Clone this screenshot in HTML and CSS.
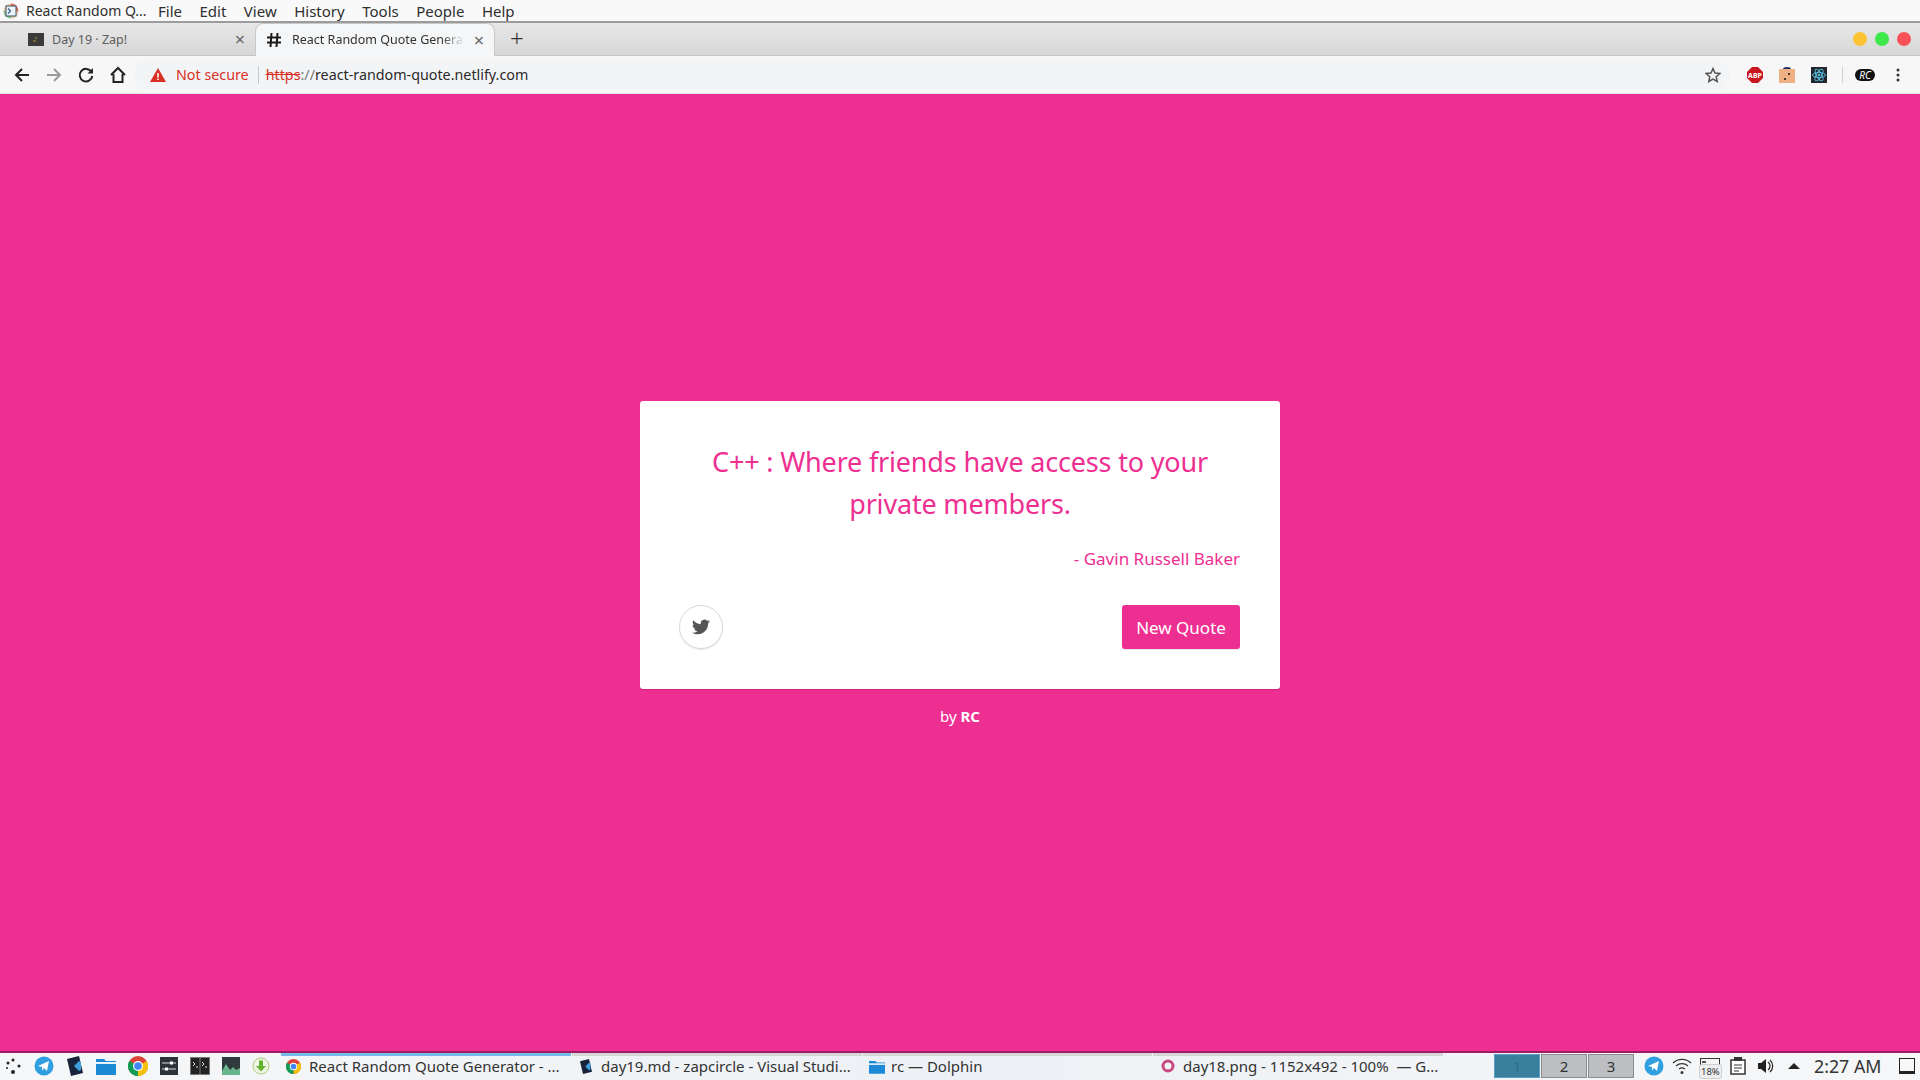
FILE: index.html

```html
<!DOCTYPE html>
<html lang="en">
<head>
  <meta charset="UTF-8" />
  <title>React Random Quote Generator</title>
  <link rel="stylesheet" href="styles.css">
</head>
<body>
  <div class="menubar">
    <svg class="app-icon" width="16" height="16" viewBox="0 0 16 16">
      <circle cx="8" cy="8" r="7.5" fill="#e8c9a0"/>
      <path d="M8 .5A7.5 7.5 0 0 1 15.5 8H8z" fill="#e06a5c"/>
      <path d="M.5 8A7.5 7.5 0 0 0 8 15.5V8z" fill="#8cc58a"/>
      <rect x="3" y="3" width="10" height="10" fill="#eef3f7" stroke="#35556e"/>
      <path d="M5 5.5 7.5 8 5 10.500" fill="none" stroke="#2a5d88" stroke-width="1.200"/>
    </svg>
    <span class="app-name">React Random Q...</span>
    <span class="menu-item">File</span>
    <span class="menu-item">Edit</span>
    <span class="menu-item">View</span>
    <span class="menu-item">History</span>
    <span class="menu-item">Tools</span>
    <span class="menu-item">People</span>
    <span class="menu-item">Help</span>
  </div>

  <div class="tabstrip">
    <div class="tab">
      <svg class="tab-icon" width="16" height="13" viewBox="0 0 16 13">
        <rect width="16" height="13" fill="#3a3a3a"/>
        <path d="M5 8h3M7 5h2" stroke="#b8962e" stroke-width="1"/>
      </svg>
      <span class="tab-title">Day 19 · Zap!</span>
      <span class="tab-close">×</span>
    </div>
    <div class="tab tab-active">
      <svg class="tab-icon" width="16" height="16" viewBox="0 0 16 16">
        <path d="M1 5.500h14M1 10.500h14M5.500 1 4.500 15M11.500 1l-1 14" stroke="#1b1b1b" stroke-width="2" fill="none"/>
      </svg>
      <span class="tab-title tab-title-fade">React Random Quote Genera</span>
      <span class="tab-close">×</span>
    </div>
    <span class="new-tab">+</span>
    <div class="window-dots">
      <span class="dot dot-yellow"></span>
      <span class="dot dot-green"></span>
      <span class="dot dot-red"></span>
    </div>
  </div>

  <div class="toolbar">
    <svg class="nav-icon" width="18" height="18" viewBox="0 0 18 18"><path d="M16 9H3M9 3 3 9l6 6" fill="none" stroke="#222" stroke-width="2"/></svg>
    <svg class="nav-icon" width="18" height="18" viewBox="0 0 18 18"><path d="M2 9h13M9 3l6 6-6 6" fill="none" stroke="#9a9a9a" stroke-width="2"/></svg>
    <svg class="nav-icon" width="18" height="18" viewBox="0 0 18 18"><path d="M14.500 6A6.300 6.300 0 1 0 15.300 10" fill="none" stroke="#222" stroke-width="2"/><path d="M16 2v5.500h-5.500z" fill="#222"/></svg>
    <svg class="nav-icon" width="18" height="18" viewBox="0 0 18 18"><path d="M2 9 9 2l7 7M4.500 8v8h9V8" fill="none" stroke="#222" stroke-width="2"/></svg>
    <div class="omnibox">
      <svg class="warn-icon" width="16" height="14" viewBox="0 0 16 14"><path d="M8 0 16 14H0z" fill="#d93025"/><path d="M8 5v4.500M8 10.500v1.500" stroke="#fff" stroke-width="1.500"/></svg>
      <span class="not-secure">Not secure</span>
      <span class="omni-sep"></span>
      <span class="url"><span class="url-https">https</span><span class="url-slash">://</span>react-random-quote.netlify.com</span>
      <svg class="star" width="16" height="16" viewBox="0 0 16 16"><path d="M8 1.500 10 6l4.800.5-3.600 3.200 1 4.800L8 12l-4.200 2.500 1-4.800L1.200 6.500 6 6z" fill="none" stroke="#555" stroke-width="1.500"/></svg>
    </div>
    <div class="extensions">
      <svg class="ext ext-gap" width="16" height="16" viewBox="0 0 16 16"><path d="M5 0h6l5 5v6l-5 5H5l-5-5V5z" fill="#c8171e"/><text x="8" y="10.500" class="abp-text">ABP</text></svg>
      <svg class="ext ext-gap" width="16" height="16" viewBox="0 0 16 16"><rect y="2" width="16" height="14" fill="#eeb184"/><path d="M4 2a4 2 0 0 1 8 0z" fill="#27306b"/><rect x="9" y="6" width="2" height="2" fill="#4a3a2a"/><rect x="5" y="11" width="2" height="2" fill="#4a3a2a"/></svg>
      <svg class="ext" width="16" height="16" viewBox="0 0 16 16"><rect width="16" height="16" fill="#20262b"/><g fill="none" stroke="#5cc3e6" stroke-width=".9"><ellipse cx="8" cy="8" rx="6.500" ry="2.600"/><ellipse cx="8" cy="8" rx="6.500" ry="2.600" transform="rotate(60 8 8)"/><ellipse cx="8" cy="8" rx="6.500" ry="2.600" transform="rotate(120 8 8)"/></g><circle cx="8" cy="8" r="1.300" fill="#5cc3e6"/></svg>
      <span class="ext-sep"></span>
      <svg class="ext-rc" width="20" height="12" viewBox="0 0 20 12"><rect width="20" height="12" rx="6" fill="#111"/><text x="10" y="9.500" class="rc-text">RC</text></svg>
      <svg class="kebab" width="4" height="14" viewBox="0 0 4 14"><circle cx="2" cy="2" r="1.500" fill="#333"/><circle cx="2" cy="7" r="1.500" fill="#333"/><circle cx="2" cy="12" r="1.500" fill="#333"/></svg>
    </div>
  </div>

  <main class="page">
    <div class="quote-card">
      <p class="quote-text">C++ : Where friends have access to your private members.</p>
      <p class="quote-author">- Gavin Russell Baker</p>
      <div class="quote-actions">
        <a class="tweet-btn">
          <svg width="18" height="18" viewBox="0 0 24 24"><path fill="#555" d="M23.953 4.570a10 10 0 0 1-2.825.775 4.958 4.958 0 0 0 2.163-2.723c-.951.555-2.005.959-3.127 1.184a4.920 4.920 0 0 0-8.384 4.482C7.690 8.095 4.067 6.130 1.640 3.162a4.822 4.822 0 0 0-.666 2.475c0 1.710.870 3.213 2.188 4.096a4.904 4.904 0 0 1-2.228-.616v.060a4.923 4.923 0 0 0 3.946 4.827 4.996 4.996 0 0 1-2.212.085 4.936 4.936 0 0 0 4.604 3.417 9.867 9.867 0 0 1-6.102 2.105c-.390 0-.779-.023-1.170-.067a13.995 13.995 0 0 0 7.557 2.209c9.053 0 13.998-7.496 13.998-13.985 0-.210 0-.420-.015-.630A9.935 9.935 0 0 0 24 4.590z"/></svg>
        </a>
        <button class="new-quote">New Quote</button>
      </div>
    </div>
    <p class="credit">by <b>RC</b></p>
  </main>

  <div class="taskbar">
    <div class="launchers">
      <svg class="launch" width="18" height="18" viewBox="0 0 18 18"><g fill="#222"><circle cx="4" cy="6" r="1.500"/><circle cx="9" cy="3" r="1.500"/><circle cx="15" cy="9" r="1.500"/><circle cx="9" cy="15" r="2"/><circle cx="3" cy="11" r="1"/></g></svg>
      <svg class="launch" width="20" height="20" viewBox="0 0 20 20"><circle cx="10" cy="10" r="9.500" fill="#2f9fe0"/><path d="M4 10 15 5l-2 10-3-3-2 2.500V11z" fill="#fff"/></svg>
      <svg class="launch" width="18" height="20" viewBox="0 0 18 20"><path d="M1 3 13 0l4 17-12 3z" fill="#17233a"/><path d="M13 5 8 10l5 5 2-1V6z" fill="#3e9ddd"/></svg>
      <svg class="launch" width="20" height="18" viewBox="0 0 20 18"><path d="M0 2h8l2 2h10v14H0z" fill="#1d8ad6"/><rect y="5" width="20" height="2" fill="#e8f3fa"/></svg>
      <svg class="launch" width="20" height="20" viewBox="0 0 20 20"><circle cx="10" cy="10" r="10" fill="#db4437"/><path d="M10 10 18.700 5A10 10 0 0 1 10 20z" fill="#f4c20d"/><path d="M10 10V20A10 10 0 0 1 1.300 5z" fill="#0f9d58"/><circle cx="10" cy="10" r="5" fill="#fff"/><circle cx="10" cy="10" r="3.800" fill="#4285f4"/></svg>
      <svg class="launch" width="18" height="18" viewBox="0 0 18 18"><rect width="18" height="18" fill="#2b3238"/><path d="M2 6h14M2 12h14" stroke="#ddd"/><rect x="10" y="4.500" width="3" height="3" fill="#fff"/><rect x="5" y="10.500" width="3" height="3" fill="#fff"/></svg>
      <svg class="launch" width="20" height="18" viewBox="0 0 20 18"><rect x=".5" y=".5" width="19" height="17" fill="#222" stroke="#777"/><path d="M3 5l2 2-2 2M8 10H6M12 5l2 2-2 2M17 10h-2" stroke="#ddd" fill="none"/><path d="M10 1v16" stroke="#777"/></svg>
      <svg class="launch" width="18" height="18" viewBox="0 0 18 18"><rect width="18" height="18" fill="#2e3a3c"/><path d="M0 14 4 7l4 6 3-3 3 3 4-2v7H0z" fill="#68b58e"/></svg>
      <svg class="launch" width="18" height="18" viewBox="0 0 18 18"><circle cx="9" cy="9" r="8" fill="#eef5e4" stroke="#a9cf7d"/><path d="M7 3.500h4V9h3l-5 5.500L4 9h3z" fill="#62b32d"/></svg>
    </div>
    <div class="task task-active">
      <svg width="15" height="15" viewBox="0 0 20 20"><circle cx="10" cy="10" r="10" fill="#db4437"/><path d="M10 10 18.700 5A10 10 0 0 1 10 20z" fill="#f4c20d"/><path d="M10 10V20A10 10 0 0 1 1.300 5z" fill="#0f9d58"/><circle cx="10" cy="10" r="5" fill="#fff"/><circle cx="10" cy="10" r="3.800" fill="#4285f4"/></svg>
      <span>React Random Quote Generator - ...</span>
    </div>
    <div class="task task-code">
      <svg width="14" height="15" viewBox="0 0 18 20"><path d="M1 3 13 0l4 17-12 3z" fill="#17233a"/><path d="M13 5 8 10l5 5 2-1V6z" fill="#3e9ddd"/></svg>
      <span>day19.md - zapcircle - Visual Studi...</span>
    </div>
    <div class="task task-files">
      <svg width="16" height="15" viewBox="0 0 20 18"><path d="M0 2h8l2 2h10v14H0z" fill="#1d8ad6"/><rect y="5" width="20" height="2" fill="#e8f3fa"/></svg>
      <span>rc — Dolphin</span>
    </div>
    <div class="task task-image">
      <svg width="14" height="14" viewBox="0 0 14 14"><circle cx="7" cy="7" r="5" fill="none" stroke="#c84a82" stroke-width="3"/></svg>
      <span>day18.png - 1152x492 - 100%  — G...</span>
    </div>
    <div class="pager">
      <span class="desk desk-current">1</span>
      <span class="desk">2</span>
      <span class="desk">3</span>
    </div>
    <div class="tray">
      <svg width="20" height="20" viewBox="0 0 20 20"><circle cx="10" cy="10" r="9.500" fill="#2f9fe0"/><path d="M4 10 15 5l-2 10-3-3-2 2.500V11z" fill="#fff"/></svg>
      <svg width="20" height="18" viewBox="0 0 20 18"><g fill="none" stroke="#333" stroke-width="1.200"><path d="M1 6a13 13 0 0 1 18 0"/><path d="M4 9a9 9 0 0 1 12 0"/><path d="M7 12a5 5 0 0 1 6 0"/></g><circle cx="10" cy="15.500" r="1.500" fill="#333"/></svg>
      <div class="battery">
        <svg width="20" height="14" viewBox="0 0 20 14"><rect x=".5" y=".5" width="19" height="13" fill="#f4f4f4" stroke="#333"/><rect x="2" y="3" width="4" height="2" fill="#555"/></svg>
        <span class="battery-label">18%</span>
      </div>
      <svg width="16" height="18" viewBox="0 0 16 18"><rect x="1" y="3" width="14" height="14" fill="#fff" stroke="#333" stroke-width="1.500"/><rect x="4" y="0" width="8" height="4" fill="#333"/><path d="M4 8h8M4 11h8M4 14h5" stroke="#333"/></svg>
      <svg width="18" height="16" viewBox="0 0 18 16"><path d="M1 5h3l5-4v14l-5-4H1z" fill="#222"/><path d="M11 4a5 5 0 0 1 0 8M13 2a8 8 0 0 1 0 12" fill="none" stroke="#222" stroke-width="1.200"/></svg>
      <svg width="12" height="6" viewBox="0 0 12 6"><path d="M6 0l6 6H0z" fill="#222"/></svg>
    </div>
    <span class="clock">2:27 AM</span>
    <span class="show-desktop"></span>
  </div>
</body>
</html>
```

FILE: styles.css

```css
* {
  box-sizing: border-box;
}
html, body {
  margin: 0;
  height: 100%;
}
body {
  width: 1920px;
  height: 1080px;
  overflow: hidden;
  display: flex;
  flex-direction: column;
  font-family: "Noto Sans", sans-serif;
  color: #333;
  background-color: #ee2f92;
}

/* top menu */
.menubar {
  height: 23px;
  flex: none;
  display: flex;
  align-items: center;
  background-color: #f9f9f9;
  border-bottom: 2px solid #9c9c9c;
  font-size: 14px;
  padding-left: 3px;
  color: #2f2f2f;
}
.app-icon {
  margin-right: 7px;
}
.app-name {
  width: 132px;
}
.menu-item {
  margin-right: 17.500px;
  font-size: 15px;
}

/* tabs */
.tabstrip {
  height: 33px;
  flex: none;
  display: flex;
  align-items: stretch;
  background: linear-gradient(#e8e8e8, #d6d6d6);
  border-bottom: 1px solid #c4c4c4;
  font-size: 12.500px;
}
.tab {
  width: 255px;
  display: flex;
  align-items: center;
  padding-left: 28px;
  color: #5c5c5c;
}
.tab-active {
  width: 240px;
  padding-left: 10px;
  padding-bottom: 1px;
  margin-bottom: -1px;
  background-color: #f5f6f7;
  border-radius: 8px 8px 0 0;
  border: 1px solid #c8c8c8;
  border-bottom: none;
  color: #333;
}
.tab-icon {
  margin-right: 8px;
}
.tab-active .tab-icon {
  margin-right: 10px;
}
.tab-title {
  flex: 1;
  white-space: nowrap;
}
.tab-title-fade {
  -webkit-mask-image: linear-gradient(90deg, #000 85%, transparent 98%);
  mask-image: linear-gradient(90deg, #000 85%, transparent 98%);
}
.tab-close {
  font-size: 18px;
  color: #666;
  margin-right: 10px;
  margin-left: 6px;
}
.new-tab {
  font-size: 24px;
  font-weight: 300;
  line-height: 30px;
  margin-left: 15px;
  color: #333;
}
.window-dots {
  margin-left: auto;
  display: flex;
  align-items: center;
  gap: 8px;
  padding-right: 9px;
}
.dot {
  width: 14px;
  height: 14px;
  border-radius: 50%;
}
.dot-yellow { background-color: #fdc433; }
.dot-green { background-color: #3ee84b; }
.dot-red { background-color: #f9505a; }

/* address bar */
.toolbar {
  height: 38px;
  flex: none;
  display: flex;
  align-items: center;
  padding-left: 13px;
  background-color: #f7f7f8;
  border-bottom: 1px solid #e2e2e2;
}
.nav-icon {
  margin-right: 14px;
}
.omnibox {
  width: 1597px;
  height: 30px;
  margin-left: -8px;
  padding-left: 17px;
  padding-right: 9px;
  display: flex;
  align-items: center;
  background-color: #f3f4f6;
  border-radius: 15px;
  font-size: 14.300px;
}
.warn-icon {
  margin-right: 10px;
}
.not-secure {
  color: #d93025;
}
.omni-sep {
  width: 1px;
  height: 18px;
  background-color: #c9c9c9;
  margin: 0 7px 0 9px;
}
.url {
  color: #2a2a2a;
}
.url-https {
  color: #d93025;
  text-decoration: line-through;
}
.url-slash {
  color: #777;
}
.star {
  margin-left: auto;
}
.extensions {
  display: flex;
  align-items: center;
  padding-left: 17px;
}
.ext-gap {
  margin-right: 16px;
}
.ext-sep {
  width: 1px;
  height: 16px;
  background-color: #d0d0d0;
  margin: 0 12px 0 15px;
}
.ext-rc {
  margin-right: 21px;
}
.abp-text {
  font-size: 7px;
  font-weight: 700;
  fill: #fff;
  text-anchor: middle;
}
.rc-text {
  font-size: 10px;
  font-style: italic;
  fill: #fff;
  text-anchor: middle;
}

/* quote page */
.page {
  flex: 1;
  display: flex;
  flex-direction: column;
  align-items: center;
  padding-top: 307px;
  background-color: #ee2f92;
}
.quote-card {
  width: 640px;
  height: 288px;
  padding: 40px;
  background-color: #fff;
  border-radius: 3px;
  box-shadow: 0 1px 1px rgba(0, 0, 0, .15);
}
.quote-text {
  margin: 0 0 22px;
  text-align: center;
  font-size: 27px;
  letter-spacing: -.18px;
  line-height: 42px;
  color: #ee2f92;
}
.quote-author {
  margin: 0 0 34px;
  text-align: right;
  font-size: 17px;
  line-height: 24px;
  color: #ee2f92;
}
.quote-actions {
  display: flex;
  justify-content: space-between;
  align-items: center;
}
.tweet-btn {
  width: 44px;
  height: 44px;
  margin-left: -1px;
  display: flex;
  align-items: center;
  justify-content: center;
  border-radius: 50%;
  border: 1px solid #d8d8d8;
  box-shadow: 0 1px 1px rgba(0, 0, 0, .1);
}
.new-quote {
  width: 118px;
  height: 44px;
  border: none;
  border-radius: 3px;
  background-color: #ee2f92;
  color: #fff;
  font-family: inherit;
  font-size: 17px;
  box-shadow: 0 1px 1px rgba(0, 0, 0, .1);
}
.credit {
  margin: 16px 0 0;
  font-size: 15px;
  line-height: 22px;
  color: #fff;
}

/* panel */
.taskbar {
  height: 29px;
  flex: none;
  display: flex;
  align-items: center;
  padding-bottom: 1px;
  background: linear-gradient(90deg, #f6f7f8, #edf1f5 50%, #f6f7f8);
  border-top: 2px solid #9e1c62;
  font-size: 15px;
  color: #333;
}
.launchers {
  width: 281px;
  display: flex;
  align-items: center;
  padding-left: 4px;
  gap: 12px;
}
.task {
  height: 100%;
  display: flex;
  align-items: center;
  gap: 8px;
  white-space: pre;
  border-top: 3px solid #d4d6d8;
  padding-left: 6px;
  padding-bottom: 3px;
}
.task-active {
  width: 290px;
  border-top-color: #74bde8;
  padding-left: 5px;
}
.task-code {
  width: 290px;
  margin-left: 1px;
  padding-left: 7px;
}
.task-files {
  width: 289px;
  margin-left: 1px;
  gap: 6px;
}
.task-image {
  width: 290px;
  margin-left: 1px;
  padding-left: 8px;
}
.pager {
  display: flex;
  margin-left: 51px;
  gap: 1px;
}
.desk {
  width: 46px;
  height: 24px;
  display: flex;
  align-items: center;
  justify-content: center;
  background-color: #bcbec2;
  border: 1px solid #8a8c90;
  font-size: 15px;
}
.desk-current {
  background-color: #39809f;
  border-color: #5b9fc2;
  color: #2f6d8a;
}
.tray {
  display: grid;
  grid-template-columns: repeat(6, 28px);
  align-items: center;
  justify-items: center;
  margin-left: 6px;
}
.battery {
  position: relative;
  width: 20px;
  height: 20px;
}
.battery-label {
  position: absolute;
  left: -1px;
  top: 8px;
  padding: 0 1px;
  font-size: 9.500px;
  line-height: 13px;
  background-color: #eceef0;
  border: 1px solid #d0d0d0;
  border-radius: 3px;
}
.clock {
  margin-left: 6px;
  font-size: 17.800px;
}
.show-desktop {
  width: 16px;
  height: 16px;
  margin-left: 18px;
  border: 1.500px solid #222;
  border-bottom-width: 3px;
  background-color: #f7f7f8;
}
```
